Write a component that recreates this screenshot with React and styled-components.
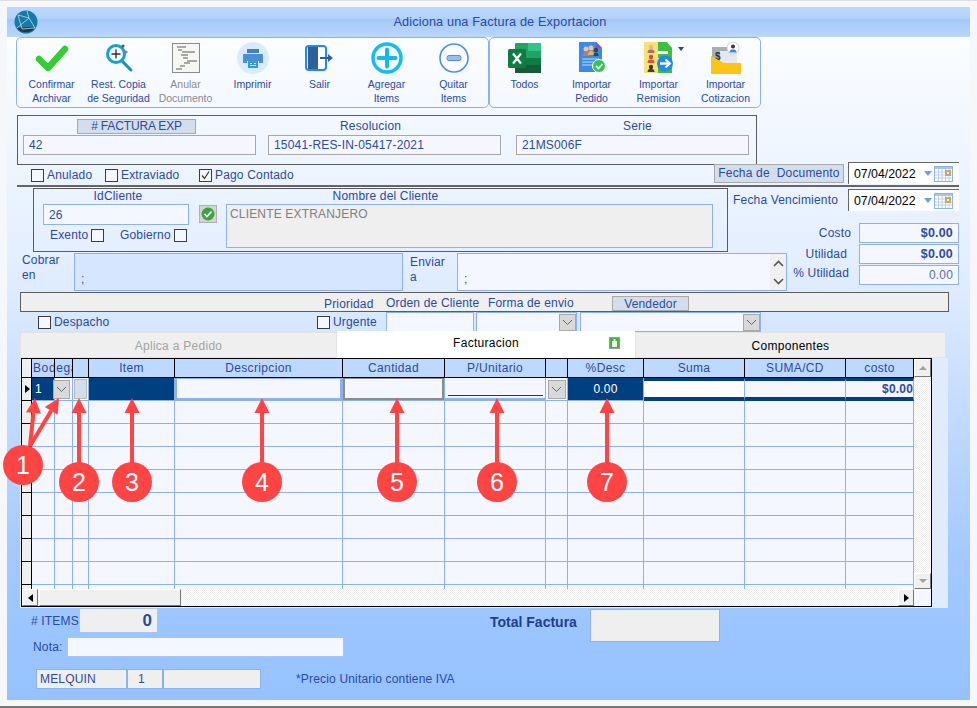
import React from 'react';
import styled, { createGlobalStyle } from 'styled-components';

const TEXT = '#2b4a9f';
const LINE = '#8db1e8';
const FIELD = '#f4f7ff';
const COLS = '10px 23px 18px 16px 86px 168px 102px 101px 22px 76px 101px 101px 68px';

const Global = createGlobalStyle`
    html, body { margin: 0; padding: 0; background: #f5f7fa; }
    * { box-sizing: border-box; }
    body { font-family: "Liberation Sans", Arial, sans-serif; font-size: 12px; letter-spacing: .17px; color: ${TEXT}; }
`;

const Page = styled.div`
    position: relative;
    width: 977px;
    height: 708px;
    padding: 7px 7px 0;
    overflow: hidden;
    background: #f5f7fa;
    border-top: 1px solid #dedede;
    border-bottom: 2px solid #777;
`;
const Window = styled.div`
    display: flex;
    flex-direction: column;
    height: 693px;
    margin-top: -1px;
`;
const TitleBar = styled.div`
    position: relative;
    flex: none;
    height: 30px;
    display: flex;
    align-items: center;
    justify-content: center;
    padding-left: 23px;
    font-size: 12.7px;
    letter-spacing: .14px;
    color: #2a4a9c;
    background: linear-gradient(#bcd9fe 0, #b2d2fb 38%, #a3c8f8 40%, #bad7fb 100%);
`;
const Logo = styled.svg`
    position: absolute;
    left: 7px;
    top: 3px;
`;
const Body = styled.div`
    flex: 1;
    padding-left: 9px;
    background: linear-gradient(#fbfdff 0, #e2eeff 35%, #c5dcff 55%, #a4c9ff 78%, #9bc5ff 90%, #95c2ff 100%);
`;

const Toolbar = styled.div`
    display: flex;
    height: 71px;
`;
const ToolGroup = styled.div`
    display: flex;
    padding: 0 1px;
    border: 1px solid ${LINE};
    border-radius: 5px;
`;
const ToolButton = styled.div`
    width: 67px;
    display: flex;
    flex-direction: column;
    align-items: center;
    font-size: 10.5px;
    letter-spacing: 0;
    line-height: 14px;
    text-align: center;
    white-space: nowrap;
    color: ${p => (p.$disabled ? '#8a8a8a' : TEXT)};
`;
const ToolIcon = styled.div`
    position: relative;
    height: 39px;
    display: flex;
    align-items: center;
    justify-content: center;
`;
const MenuCaret = styled.span`
    position: absolute;
    right: -10px;
    top: 9px;
    border: 3px solid transparent;
    border-top: 4px solid #24458f;
    border-bottom: 0;
`;

const Panel = styled.div`
    width: 740px;
    height: 50px;
    margin: 7px 0 0 1px;
    padding: 1px 5px;
    border: 1px solid #5c5c5c;
`;
const CaptionRow = styled.div`
    display: flex;
    height: 18px;
    align-items: center;
`;
const Caption = styled.div`
    flex: none;
    width: ${p => (p.$w ? `${p.$w}px` : 'auto')};
    margin-left: ${p => p.$ml || 0}px;
    white-space: nowrap;
    line-height: ${p => p.$lh || 15}px;
`;
const TagLabel = styled.div`
    flex: none;
    width: ${p => p.$w}px;
    height: ${p => p.$h || 15}px;
    margin-left: ${p => p.$ml || 0}px;
    margin-top: ${p => p.$mt || 0}px;
    display: flex;
    align-items: center;
    justify-content: center;
    white-space: nowrap;
    background: #d3deec;
    border: 1px solid #a9a9a9;
    letter-spacing: ${p => p.$ls ?? 0.17}px;
`;
const FieldRow = styled.div`
    display: flex;
    gap: 12px;
`;
const Field = styled.div`
    flex: none;
    width: ${p => p.$w}px;
    height: ${p => p.$h}px;
    margin-left: ${p => p.$ml || 0}px;
    padding: ${p => p.$pad || '0 5px'};
    display: flex;
    align-items: center;
    justify-content: ${p => (p.$right ? 'flex-end' : 'flex-start')};
    font-weight: ${p => (p.$bold ? 700 : 400)};
    font-size: ${p => p.$size || 12}px;
    color: ${p => p.$color || TEXT};
    background: ${p => p.$bg || FIELD};
    border: 1px solid ${p => p.$line || LINE};
    white-space: nowrap;
`;

const CheckRow = styled.div`
    position: relative;
    display: flex;
    height: 20px;
    margin-left: 15px;
    align-items: center;
    width: 928px;
`;
const CheckLabel = styled.label`
    display: flex;
    flex: none;
    align-items: center;
    gap: 3px;
    width: ${p => (p.$w ? `${p.$w}px` : 'auto')};
    white-space: nowrap;
`;
const FlagWrap = styled.div`
    display: flex;
    align-items: center;
    padding-left: 18px;
`;
const Box = styled.span`
    flex: none;
    width: 13px;
    height: 13px;
    display: inline-flex;
    align-items: center;
    justify-content: center;
    border: 1px solid #3c3c3c;
    background: ${FIELD};
`;
const DateBox = styled.div`
    flex: none;
    width: 111px;
    height: 22px;
    margin-left: ${p => p.$ml || 0}px;
    margin-top: ${p => p.$mt || 0}px;
    padding: 0 6px 0 5px;
    display: flex;
    align-items: center;
    font-size: 12.3px;
    letter-spacing: 0;
    color: #000;
    background: #fff;
    border-top: 1px solid #666;
    border-left: 1px solid #666;
`;
const DateCaret = styled.span`
    margin: 0 2px 0 auto;
    border: 4px solid transparent;
    border-top: 5px solid #6b9fe2;
    border-bottom: 0;
`;
const Rule = styled.div`
    width: 942px;
    height: 2px;
    margin-left: 1px;
    background: #666;
`;

const Main = styled.div`
    display: flex;
    height: 105px;
`;
const MainLeft = styled.div`
    flex: none;
    width: 770px;
    margin-left: 1px;
`;
const ClientPanel = styled.div`
    display: grid;
    grid-template-columns: 146px 10px 18px 9px 487px;
    grid-template-rows: 15px 21px auto;
    width: 695px;
    height: 64px;
    margin: 1px 0 0 16px;
    padding-left: 9px;
    border: 1px solid #5c5c5c;
`;
const ClientCaption = styled.div`
    grid-column: ${p => p.$col};
    padding: ${p => p.$pad};
    text-align: center;
    line-height: 15px;
`;
const ClientFlags = styled.div`
    grid-column: 1;
    grid-row: 3;
    display: flex;
    align-items: center;
    height: 20px;
    padding-left: 7px;
`;
const OkButton = styled.div`
    grid-column: 3;
    grid-row: 2;
    width: 18px;
    height: 18px;
    margin-top: 1px;
    display: flex;
    align-items: center;
    justify-content: center;
    background: #d4d4d4;
    border: 1px solid #b0b0b0;
`;
const ClientName = styled(Field)`
    grid-column: 5;
    grid-row: 2 / 4;
    padding: 2px 3px;
    align-items: flex-start;
    color: #808080;
    background: #efefef;
`;
const AddressRow = styled.div`
    display: flex;
    height: 38px;
    margin-top: 1px;
    padding-left: 5px;
`;
const AddressLabel = styled.div`
    flex: none;
    width: ${p => p.$w}px;
    margin-top: ${p => p.$mt || 0}px;
    line-height: 15px;
`;
const AddressField = styled.div`
    position: relative;
    flex: none;
    width: ${p => p.$w}px;
    margin-right: 7px;
    padding: 17px 0 0 6px;
    line-height: 16px;
    background: ${p => p.$bg};
    border: 1px solid ${LINE};
`;
const Spin = styled.div`
    position: absolute;
    top: 0;
    right: 0;
    bottom: 0;
    width: 16px;
    display: flex;
    flex-direction: column;
    align-items: center;
    justify-content: space-around;
    background: #f0f0f0;
`;
const MainRight = styled.div`
    flex: none;
    width: 166px;
    margin-left: 6px;
`;
const VencRow = styled.div`
    display: flex;
    justify-content: flex-end;
    align-items: center;
    gap: 10px;
    height: 22px;
    margin-top: 2px;
`;
const Totals = styled.div`
    display: grid;
    grid-template-columns: 66px 100px;
    grid-auto-rows: 21px;
    margin-top: 12px;
`;
const TotalLabel = styled.div`
    padding-right: ${p => p.$pr || 0}px;
    margin-top: ${p => p.$mt || 0}px;
    text-align: right;
    white-space: nowrap;
    line-height: 20px;
`;

const Bar = styled.div`
    display: flex;
    align-items: flex-end;
    width: 929px;
    height: 20px;
    margin-left: 4px;
    padding-left: 303px;
    background: #efefef;
    border: 1px solid #5c5c5c;
`;
const OptionRow = styled.div`
    display: grid;
    grid-template-columns: 297px 69px 88px 2px 101px 3px 181px;
    height: 20px;
    margin-left: 4px;
    align-items: center;
`;
const Select = styled(Field)`
    justify-content: flex-end;
    padding: 0;
`;
const DropButton = styled.div`
    flex: none;
    position: relative;
    width: ${p => p.$w || 17}px;
    height: ${p => p.$h || 17}px;
    margin-left: ${p => p.$ml || 0}px;
    display: flex;
    align-items: center;
    justify-content: center;
    background: #d9d9d9;
    border: 1px solid #a8a8a8;
`;

const Tabs = styled.div`
    display: grid;
    grid-template-columns: 317px 298px 311px;
    height: 26px;
    margin-left: 4px;
`;
const Tab = styled.div`
    position: relative;
    display: flex;
    align-items: center;
    justify-content: center;
    margin-top: ${p => (p.$active ? -1 : 0)}px;
    padding: ${p => (p.$active ? '0 0 3px' : '1px 0 0')};
    background: ${p => (p.$active ? '#fff' : '#efefef')};
    color: ${p => (p.$muted ? '#a3a3a3' : '#000')};
    border: ${p => (p.$active ? 0 : '1px solid #e3e3e3')};
    letter-spacing: .28px;
`;
const TabIcon = styled.span`
    position: absolute;
    right: 15px;
    top: 6px;
    width: 11px;
    height: 12px;
    background: #45b045;
    border: 1px solid #9a9a9a;
    display: flex;
    align-items: center;
    justify-content: center;
`;
const TabPanel = styled.div`
    width: 928px;
    height: 250px;
    margin-left: 4px;
    padding: 0 16px 1px 1px;
    background: #e0ecfd;
`;
const GridFrame = styled.div`
    height: 249px;
    display: flex;
    flex-direction: column;
    border: 1px solid #000;
    border-bottom-width: 2px;
    background: ${FIELD};
`;
const GridTop = styled.div`
    display: flex;
    height: 230px;
`;
const Rows = styled.div`
    flex: none;
    width: 892px;
    height: 230px;
    overflow: hidden;
`;
const HeadRow = styled.div`
    display: grid;
    grid-template-columns: ${COLS};
    height: 19px;
    border-bottom: 1px solid #000;
`;
const HeadCell = styled.div`
    position: relative;
    grid-column: span ${p => p.$span || 1};
    overflow: hidden;
    display: flex;
    align-items: center;
    justify-content: center;
    white-space: nowrap;
    letter-spacing: .35px;
    background: ${p => (p.$corner ? '#efefef' : '#bdd9ff')};
    border-right: 1px solid #000;
`;
const BodegaText = styled.span`
    position: absolute;
    left: 1px;
    letter-spacing: .6px;
`;
const ColumnBreak = styled.span`
    position: absolute;
    left: 22px;
    top: 0;
    bottom: 0;
    width: 1px;
    background: #000;
`;
const DataRow = styled.div`
    display: grid;
    grid-template-columns: ${COLS};
    height: 23px;
`;
const Selector = styled.div`
    display: flex;
    align-items: center;
    background: #efefef;
    border-right: 1px solid #000;
    border-bottom: 1px solid #000;
`;
const Pointer = styled.span`
    border: 4px solid transparent;
    border-left: 5px solid #000;
    border-right: 0;
    margin-left: 3px;
`;
const Cell = styled.div`
    display: flex;
    align-items: center;
    justify-content: ${p => p.$justify || 'flex-start'};
    padding: ${p => p.$pad || 0};
    font-weight: ${p => (p.$bold ? 700 : 400)};
    color: ${p => p.$color || TEXT};
    background: ${p => p.$bg || FIELD};
    border-right: 1px solid ${LINE};
    border-bottom: 1px solid ${LINE};
`;
const StripCell = styled(Cell)`
    border-top: 3px solid #003f80;
    border-bottom: 4px solid #003f80;
`;
const EditBox = styled.div`
    flex: 1;
    align-self: stretch;
    border: 2px solid ${p => p.$line};
    border-top-width: 1px;
    background: ${FIELD};
`;
const UnderlineBox = styled.div`
    width: 100%;
    height: 100%;
    padding: 0 2px 2px 3px;
    border-bottom: 2px solid ${LINE};
`;
const Underline = styled.div`
    height: 100%;
    border-bottom: 1px solid #003f80;
`;
const MiniBox = styled.div`
    width: 13px;
    height: 20px;
    margin: 0 auto;
    background: #d3deec;
    border: 1px solid #b9b9b9;
`;
const Track = styled.div`
    background-color: #fff;
    background-image: repeating-conic-gradient(#ededed 0 25%, #fff 0 50%);
    background-size: 2px 2px;
`;
const VScroll = styled(Track)`
    flex: none;
    width: 17px;
    height: 230px;
    display: flex;
    flex-direction: column;
    justify-content: space-between;
`;
const HScroll = styled(Track)`
    flex: 1;
    display: flex;
    justify-content: space-between;
    position: relative;
`;
const HBottom = styled.div`
    flex: 1;
    display: flex;
`;
const Corner = styled.div`
    flex: none;
    width: 17px;
    background: ${FIELD};
`;
const Bevel = styled.div`
    flex: none;
    width: ${p => p.$w}px;
    height: ${p => p.$h}px;
    display: flex;
    align-items: center;
    justify-content: center;
    background: #f0f0f0;
    border: 1px solid;
    border-color: #fff #777 #777 #fff;
`;
const Thumb = styled(Bevel)`
    position: absolute;
    left: 17px;
    top: 0;
`;
const Triangle = styled.span`
    width: 0;
    height: 0;
    border: 4px solid transparent;
    ${p => p.$dir === 'left' && `border-right: 5px solid ${p.$color}; border-left: 0;`}
    ${p => p.$dir === 'right' && `border-left: 5px solid ${p.$color}; border-right: 0;`}
    ${p => p.$dir === 'up' && `border-bottom: 4px solid ${p.$color}; border-top: 0;`}
    ${p => p.$dir === 'down' && `border-top: 4px solid ${p.$color}; border-bottom: 0;`}
`;

const Footer = styled.div`
    display: flex;
    margin-left: 15px;
`;
const FooterLeft = styled.div`
    flex: none;
    width: 455px;
`;
const FooterRow = styled.div`
    display: flex;
    align-items: center;
    height: ${p => p.$h}px;
    margin-top: ${p => p.$mt || 0}px;
    padding-left: ${p => p.$pl || 0}px;
`;
const FooterLabel = styled.div`
    flex: none;
    width: ${p => p.$w}px;
    white-space: nowrap;
`;
const TotalBlock = styled.div`
    display: flex;
    padding: 1px 0 0 4px;
`;
const TotalTitle = styled.div`
    width: 100px;
    margin-top: 5px;
    font-size: 14px;
    letter-spacing: 0;
    font-weight: 700;
    color: #1f3f8e;
    white-space: nowrap;
`;
const PriceNote = styled.div`
    margin-left: 35px;
    white-space: nowrap;
`;

const Overlay = styled.svg`
    position: absolute;
    left: 0;
    top: -1px;
    pointer-events: none;
`;
const Badge = styled.span`
    position: absolute;
    left: ${p => p.$x - 20}px;
    top: ${p => p.$y - 21}px;
    width: 40px;
    height: 40px;
    display: flex;
    align-items: center;
    justify-content: center;
    font-size: 25px;
    letter-spacing: 0;
    color: #fff;
    background: #ff4444;
    border-radius: 50%;
`;

const CheckIcon = () => (
    <svg width="34" height="28" viewBox="0 0 34 28">
        <path d="M4 15 L13 24 L30 5" fill="none" stroke="#33cc33" strokeWidth="6.5" strokeLinecap="round" strokeLinejoin="round" />
    </svg>
);
const LensIcon = () => (
    <svg width="32" height="30" viewBox="0 0 32 30">
        <path d="M19 18 L28 27" stroke="#1b8fc4" strokeWidth="3" strokeLinecap="round" />
        <circle cx="13" cy="11" r="8.5" fill="#f4fbff" stroke="#12a3cf" strokeWidth="3" />
        <path d="M13 6.5v9M8.5 11h9" stroke="#333" strokeWidth="1.4" />
        <circle cx="20" cy="3" r="1.6" fill="#555" />
        <circle cx="23" cy="9" r="1.6" fill="#e85b5b" />
    </svg>
);
const ListIcon = () => (
    <svg width="28" height="30" viewBox="0 0 28 30">
        <rect x=".5" y=".5" width="27" height="29" fill="#f6f6f2" stroke="#8a8a8a" />
        <path d="M5 4h9M6 7h4M10 9h13M9 12h7M11 15h5M15 18h10M12 20h6M8 23h5M4 26h6" stroke="#5a5a5a" strokeWidth="1.2" />
    </svg>
);
const PrintIcon = () => (
    <svg width="32" height="32" viewBox="0 0 32 32">
        <circle cx="16" cy="16" r="16" fill="#d9ecff" />
        <rect x="10" y="7" width="12" height="4" fill="#3f80c4" />
        <path d="M7 12h18a1 1 0 0 1 1 1v8h-4v-2h-12v2h-4v-8a1 1 0 0 1 1-1z" fill="#4a8fd6" />
        <rect x="11" y="19" width="10" height="7" fill="#2f9ae0" />
        <path d="M13 21.5h2M17 21.5h2M13 23.5h6" stroke="#e6f4ff" strokeWidth="1" />
    </svg>
);
const ExitIcon = () => (
    <svg width="30" height="26" viewBox="0 0 30 26">
        <rect x="1" y="1" width="20" height="24" rx="3" fill="#fff" stroke="#1a8cf0" strokeWidth="2" />
        <path d="M3 2h10v22H3z" fill="#2f6096" />
        <path d="M15 13h11" stroke="#2f6096" strokeWidth="2" />
        <path d="M23 9l5 4-5 4z" fill="#2f6096" />
    </svg>
);
const PlusIcon = () => (
    <svg width="32" height="32" viewBox="0 0 32 32">
        <circle cx="16" cy="16" r="14" fill="#f6fdff" stroke="#14bdf0" strokeWidth="3.5" />
        <path d="M16 7.5v17M7.5 16h17" stroke="#18b7ea" strokeWidth="4" strokeLinecap="round" />
    </svg>
);
const MinusIcon = () => (
    <svg width="30" height="30" viewBox="0 0 30 30">
        <circle cx="15" cy="15" r="14" fill="#fbfdff" stroke="#4d8df0" strokeWidth="1.6" />
        <rect x="8" y="12.5" width="14" height="5" rx="2" fill="#9cbcf0" stroke="#4d8df0" />
    </svg>
);
const ExcelIcon = () => (
    <svg width="33" height="30" viewBox="0 0 33 30">
        <rect x="7" y="0" width="26" height="30" rx="1" fill="#21a366" />
        <rect x="20" y="0" width="13" height="8" fill="#33c481" />
        <rect x="20" y="8" width="13" height="7" fill="#21a366" />
        <rect x="20" y="15" width="13" height="7" fill="#107c41" />
        <rect x="7" y="22" width="26" height="8" fill="#185c37" />
        <rect x="7" y="15" width="13" height="7" fill="#107c41" />
        <rect x="0" y="6" width="18" height="19" rx="1.5" fill="#107c41" />
        <path d="M5 10.5l8 10M13 10.5l-8 10" stroke="#fff" strokeWidth="2.2" />
    </svg>
);
const OrderIcon = () => (
    <svg width="28" height="31" viewBox="0 0 28 31">
        <path d="M1 0h17l6 6v24H1z" fill="#3d8ae6" />
        <path d="M18 0l6 6h-6z" fill="#7a55c8" />
        <circle cx="8" cy="7" r="2.5" fill="#f1c19c" />
        <path d="M4.5 14c0-3 1.5-4 3.5-4s3.500 1 3.500 4z" fill="#e26a5a" />
        <circle cx="13" cy="6" r="2.500" fill="#f1c19c" />
        <path d="M10 13c0-3 1-4 3-4s3 1 3 4z" fill="#f2b632" />
        <circle cx="18" cy="8" r="2.200" fill="#5a3a2a" />
        <path d="M15.500 14c0-3 1-3.500 2.500-3.500s2.500.5 2.500 3.500z" fill="#33415c" />
        <path d="M4 17h17M4 20h17M4 23h12" stroke="#bcdcff" strokeWidth="1.2" />
        <circle cx="21" cy="24" r="6.500" fill="#33c455" stroke="#fff" />
        <path d="M18 24l2.500 2.500 4-4.500" fill="none" stroke="#fff" strokeWidth="1.800" />
    </svg>
);
const RemissionIcon = () => (
    <svg width="30" height="32" viewBox="0 0 30 32">
        <rect x="0" y="0" width="14" height="31" fill="#f6e27a" />
        <path d="M14 0h9l5 6v25H14z" fill="#3fbf3f" />
        <rect x="14" y="9" width="10" height="3" fill="#fff" />
        <rect x="14" y="16" width="7" height="3" fill="#fff" />
        <circle cx="7" cy="5" r="2.200" fill="#e8b793" />
        <path d="M3.500 11c0-3 1.500-3.500 3.500-3.500s3.500.5 3.500 3.500z" fill="#b0705a" />
        <circle cx="7" cy="15" r="2.200" fill="#c9503c" />
        <path d="M3.500 21c0-3 1.500-3.500 3.500-3.500s3.500.5 3.500 3.500z" fill="#d9533f" />
        <circle cx="7" cy="25" r="2.200" fill="#4a3326" />
        <path d="M3.500 30c0-2.500 1.500-3 3.500-3s3.500.5 3.500 3z" fill="#33415c" />
        <circle cx="21" cy="21.500" r="8" fill="#1f8be8" />
        <path d="M16 21.500h9" stroke="#fff" strokeWidth="2.400" />
        <path d="M21.500 17.500l4.500 4-4.500 4" fill="none" stroke="#fff" strokeWidth="2" />
    </svg>
);
const QuoteIcon = () => (
    <svg width="30" height="32" viewBox="0 0 30 32">
        <rect x="1" y="5" width="24" height="18" fill="#a9adb8" />
        <rect x="9" y="9" width="17" height="12" fill="#e4e8f0" />
        <text x="4" y="18" fontSize="10" fontWeight="700" fill="#333" fontFamily="Liberation Sans">$</text>
        <path d="M0 14l13 7h17v11H0z" fill="#fcc419" />
        <circle cx="22" cy="6" r="6" fill="#fff" stroke="#cfcfcf" />
        <circle cx="22" cy="4.500" r="2" fill="#4a3326" />
        <path d="M18.500 10.500c0-2.500 1.500-3 3.500-3s3.500.5 3.500 3z" fill="#3d8ae6" />
    </svg>
);
const Chevron = ({ flip }) => (
    <svg width="11" height="7" viewBox="0 0 11 7">
        <path d={flip ? 'M1 6l4.500-4.500L10 6' : 'M1 1l4.500 4.500L10 1'} fill="none" stroke="#666" strokeWidth="1" />
    </svg>
);
const SpinChevron = ({ flip }) => (
    <svg width="11" height="7" viewBox="0 0 11 7">
        <path d={flip ? 'M1 6l4.500-4.500L10 6' : 'M1 1l4.500 4.500L10 1'} fill="none" stroke="#555" strokeWidth="1.6" />
    </svg>
);
const Calendar = () => (
    <svg width="19" height="16" viewBox="0 0 19 16">
        <rect x=".5" y=".5" width="18" height="15" fill="#fff" stroke="#8fb2e8" />
        <rect x="1" y="1" width="17" height="2" fill="#a9c5ef" />
        <path d="M1 6h17M1 9h17M1 12h17M4.500 3v12M8 3v12M11.500 3v12M15 3v12" stroke="#a9c5ef" strokeWidth=".8" />
        <rect x="11" y="4" width="6" height="6" fill="#c9a95c" />
        <rect x="13" y="6" width="2" height="2" fill="#fff" />
    </svg>
);

const Checkbox = ({ checked, label, w, before }) => (
    <CheckLabel $w={w}>
        {before}
        <Box>
            {checked && (
                <svg width="11" height="11" viewBox="0 0 11 11">
                    <path d="M2 5.500l2.500 3L9 1.500" fill="none" stroke="#333" strokeWidth="1.200" />
                </svg>
            )}
        </Box>
        {label}
    </CheckLabel>
);

const tools = [
    { icon: <CheckIcon />, lines: ['Confirmar', 'Archivar'] },
    { icon: <LensIcon />, lines: ['Rest. Copia', 'de Seguridad'] },
    { icon: <ListIcon />, lines: ['Anular', 'Documento'], disabled: true },
    { icon: <PrintIcon />, lines: ['Imprimir'] },
    { icon: <ExitIcon />, lines: ['Salir'] },
    { icon: <PlusIcon />, lines: ['Agregar', 'Items'] },
    { icon: <MinusIcon />, lines: ['Quitar', 'Items'] },
];
const imports = [
    { icon: <ExcelIcon />, lines: ['Todos'] },
    { icon: <OrderIcon />, lines: ['Importar', 'Pedido'] },
    { icon: <RemissionIcon />, lines: ['Importar', 'Remision'], menu: true },
    { icon: <QuoteIcon />, lines: ['Importar', 'Cotizacion'] },
];
const headers = ['Item', 'Descripcion', 'Cantidad', 'P/Unitario', '', '%Desc', 'Suma', 'SUMA/CD', 'costo'];
const arrows = [
    [30, 446, 35, 398], [30, 446, 59, 398], [79, 463, 79, 398], [132, 463, 132, 398], [262, 463, 262, 398],
    [397, 463, 397, 398], [497, 463, 497, 398], [607, 463, 607, 398],
];
const badges = [[23, 465, '1'], [79, 482, '2'], [132, 482, '3'], [262, 482, '4'], [397, 482, '5'], [497, 482, '6'], [607, 482, '7']];

const Arrow = ({ from }) => {
    const [x1, y1, x2, y2] = from;
    const len = Math.hypot(x2 - x1, y2 - y1);
    const ux = (x2 - x1) / len;
    const uy = (y2 - y1) / len;
    const bx = x2 - ux * 15;
    const by = y2 - uy * 15;
    const points = `${x2},${y2} ${bx - uy * 7.5},${by + ux * 7.5} ${bx + uy * 7.5},${by - ux * 7.5}`;
    return (
        <g>
            <line x1={x1} y1={y1} x2={bx} y2={by} stroke="#ff4444" strokeWidth="4" />
            <polygon points={points} fill="#ff4444" />
        </g>
    );
};

const ToolSet = ({ items }) => (
    <ToolGroup>
        {items.map(tool => (
            <ToolButton key={tool.lines.join()} $disabled={tool.disabled}>
                <ToolIcon>
                    {tool.icon}
                    {tool.menu && <MenuCaret />}
                </ToolIcon>
                {tool.lines.map(line => <div key={line}>{line}</div>)}
            </ToolButton>
        ))}
    </ToolGroup>
);

const EmptyRow = () => (
    <DataRow>
        <Selector />
        {Array.from({ length: 12 }, (_, i) => <Cell key={i} />)}
    </DataRow>
);

export default function App() {
    return (
        <Page>
            <Global />
            <Window>
                <TitleBar>
                    <Logo width="24" height="24" viewBox="0 0 24 24">
                        <circle cx="12" cy="12" r="11.500" fill="#157ba6" />
                        <path d="M3 18a11.500 11.500 0 0 0 18 0l-6-1z" fill="#2a3644" />
                        <path d="M4 5l11 3 6 10M4 5l4 14M15 8L3 18M15 8l-2-7M8 19l13-1" fill="none" stroke="#cfe6f0" strokeWidth=".7" />
                    </Logo>
                    Adiciona una Factura de Exportacion
                </TitleBar>
                <Body>
                    <Toolbar>
                        <ToolSet items={tools} />
                        <ToolSet items={imports} />
                    </Toolbar>

                    <Panel>
                        <CaptionRow>
                            <TagLabel $w={119} $h={15} $ml={54} $ls={-0.15}>
                                # FACTURA EXP
                            </TagLabel>
                            <Caption $ml={144}>Resolucion</Caption>
                            <Caption $ml={222}>Serie</Caption>
                        </CaptionRow>
                        <FieldRow>
                            <Field $w={233} $h={20} $line="#a8a8a8">42</Field>
                            <Field $w={233} $h={20} $line="#a8a8a8">15041-RES-IN-05417-2021</Field>
                            <Field $w={233} $h={20} $ml={3} $line="#a8a8a8">21MS006F</Field>
                        </FieldRow>
                    </Panel>

                    <CheckRow>
                        <Checkbox label="Anulado" w={74} />
                        <Checkbox label="Extraviado" w={94} />
                        <Checkbox checked label="Pago Contado" w={515} />
                        <TagLabel $w={130} $h={19} $mt={-4}>Fecha de&nbsp; Documento</TagLabel>
                        <DateBox $ml={4} $mt={-4}>07/04/2022<DateCaret /><Calendar /></DateBox>
                    </CheckRow>
                    <Rule />

                    <Main>
                        <MainLeft>
                            <ClientPanel>
                                <ClientCaption $col="1" $pad="0 0 0 4px">IdCliente</ClientCaption>
                                <ClientCaption $col="5" $pad="0 168px 0 0">Nombre del Cliente</ClientCaption>
                                <Field $w={146} $h={21}>26</Field>
                                <OkButton>
                                    <svg width="14" height="14" viewBox="0 0 14 14">
                                        <circle cx="7" cy="7" r="6.500" fill="#3fa33f" />
                                        <path d="M3.500 7l2.500 2.500 4.500-5" fill="none" stroke="#fff" strokeWidth="1.600" />
                                    </svg>
                                </OkButton>
                                <ClientName $w={487} $h={44}>CLIENTE EXTRANJERO</ClientName>
                                <ClientFlags>
                                    <Checkbox w={70} before="Exento" />
                                    <Checkbox before="Gobierno" />
                                </ClientFlags>
                            </ClientPanel>
                            <AddressRow>
                                <AddressLabel $w={52}>Cobrar<br />en</AddressLabel>
                                <AddressField $w={329} $bg="#d6e6ff">;</AddressField>
                                <AddressLabel $w={47} $mt={2}>Enviar<br />a</AddressLabel>
                                <AddressField $w={330} $bg={FIELD}>
                                    ;
                                    <Spin><SpinChevron flip /><SpinChevron /></Spin>
                                </AddressField>
                            </AddressRow>
                        </MainLeft>
                        <MainRight>
                            <VencRow>
                                <Caption>Fecha Vencimiento</Caption>
                                <DateBox>07/04/2022<DateCaret /><Calendar /></DateBox>
                            </VencRow>
                            <Totals>
                                <TotalLabel $pr={8}>Costo</TotalLabel>
                                <Field $w={100} $h={20} $right $bold $size={12.5}>$0.00</Field>
                                <TotalLabel $pr={12}>Utilidad</TotalLabel>
                                <Field $w={100} $h={20} $right $bold $size={12.5}>$0.00</Field>
                                <TotalLabel $pr={10} $mt={-2}>% Utilidad</TotalLabel>
                                <Field $w={100} $h={20} $right $color="#5a6ea8">0.00</Field>
                            </Totals>
                        </MainRight>
                    </Main>

                    <Bar>
                        <Caption $w={62} $lh={13}>Prioridad</Caption>
                        <Caption $w={102}>Orden de Cliente</Caption>
                        <Caption $w={124}>Forma de envio</Caption>
                        <TagLabel $w={77} $h={15} $mt={-2}>Vendedor</TagLabel>
                    </Bar>
                    <OptionRow>
                        <FlagWrap><Checkbox label="Despacho" /></FlagWrap>
                        <Checkbox label="Urgente" />
                        <Field $w={88} $h={20} />
                        <span />
                        <Select $w={101} $h={20}><DropButton><Chevron /></DropButton></Select>
                        <span />
                        <Select $w={181} $h={20}><DropButton><Chevron /></DropButton></Select>
                    </OptionRow>

                    <Tabs>
                        <Tab $muted>Aplica a Pedido</Tab>
                        <Tab $active>
                            Facturacion
                            <TabIcon>
                                <svg width="7" height="9" viewBox="0 0 7 9">
                                    <rect x="1" y="2" width="5" height="6" fill="#eaf6e4" />
                                    <rect x="2.500" y="0" width="2" height="2" fill="#eaf6e4" />
                                </svg>
                            </TabIcon>
                        </Tab>
                        <Tab>Componentes</Tab>
                    </Tabs>
                    <TabPanel>
                        <GridFrame>
                            <GridTop>
                                <Rows>
                                    <HeadRow>
                                        <HeadCell $corner />
                                        <HeadCell $span={2}>
                                            <BodegaText>Bodega</BodegaText>
                                            <ColumnBreak />
                                        </HeadCell>
                                        <HeadCell />
                                        {headers.map((title, i) => <HeadCell key={i}>{title}</HeadCell>)}
                                    </HeadRow>
                                    <DataRow>
                                        <Selector><Pointer /></Selector>
                                        <Cell $bg="#003f80" $color="#fff" $pad="0 0 0 3px">1</Cell>
                                        <Cell><DropButton $w={17} $h={19} $ml={-2}><Chevron /></DropButton></Cell>
                                        <Cell><MiniBox /></Cell>
                                        <Cell $bg="#003f80" />
                                        <Cell><EditBox $line={LINE} /></Cell>
                                        <Cell><EditBox $line="#8c8c8c" /></Cell>
                                        <Cell><UnderlineBox><Underline /></UnderlineBox></Cell>
                                        <Cell $justify="center"><DropButton $w={18} $h={19}><Chevron /></DropButton></Cell>
                                        <Cell $bg="#003f80" $color="#fff" $justify="center">0.00</Cell>
                                        <StripCell $bg="#fff" />
                                        <StripCell />
                                        <StripCell $bold $justify="flex-end">$0.00</StripCell>
                                    </DataRow>
                                    {Array.from({ length: 9 }, (_, i) => <EmptyRow key={i} />)}
                                </Rows>
                                <VScroll>
                                    <Bevel $w={17} $h={18}><Triangle $dir="up" $color="#a0a0a0" /></Bevel>
                                    <Bevel $w={17} $h={16}><Triangle $dir="down" $color="#a0a0a0" /></Bevel>
                                </VScroll>
                            </GridTop>
                            <HBottom>
                                <HScroll>
                                    <Bevel $w={16} $h={17}><Triangle $dir="left" $color="#000" /></Bevel>
                                    <Thumb $w={142} $h={17} />
                                    <Bevel $w={16} $h={17}><Triangle $dir="right" $color="#000" /></Bevel>
                                </HScroll>
                                <Corner />
                            </HBottom>
                        </GridFrame>
                    </TabPanel>

                    <Footer>
                        <FooterLeft>
                            <FooterRow $h={25}>
                                <FooterLabel $w={48}># ITEMS</FooterLabel>
                                <Field $w={79} $h={25} $right $bold $size={17} $bg="#efefef" $line="#a9c5ef">0</Field>
                            </FooterRow>
                            <FooterRow $h={20} $mt={4} $pl={2}>
                                <FooterLabel $w={34}>Nota:</FooterLabel>
                                <Field $w={277} $h={20} $line="#a9c5ef" />
                            </FooterRow>
                            <FooterRow $h={20} $mt={12} $pl={5}>
                                <Field $w={91} $h={20} $pad="0 3px" $bg="#efefef">MELQUIN</Field>
                                <Field $w={36} $h={20} $bg="#efefef" $pad="0 10px">1</Field>
                                <Field $w={98} $h={20} $bg="#efefef" />
                                <PriceNote>*Precio Unitario contiene IVA</PriceNote>
                            </FooterRow>
                        </FooterLeft>
                        <TotalBlock>
                            <TotalTitle>Total Factura</TotalTitle>
                            <Field $w={130} $h={33} $bg="#efefef" />
                        </TotalBlock>
                    </Footer>
                </Body>
            </Window>

            <Overlay width="977" height="708" viewBox="0 0 977 708">
                {arrows.map(a => <Arrow key={a.join()} from={a} />)}
            </Overlay>
            {badges.map(([x, y, n]) => <Badge key={n} $x={x} $y={y}>{n}</Badge>)}
        </Page>
    );
}
